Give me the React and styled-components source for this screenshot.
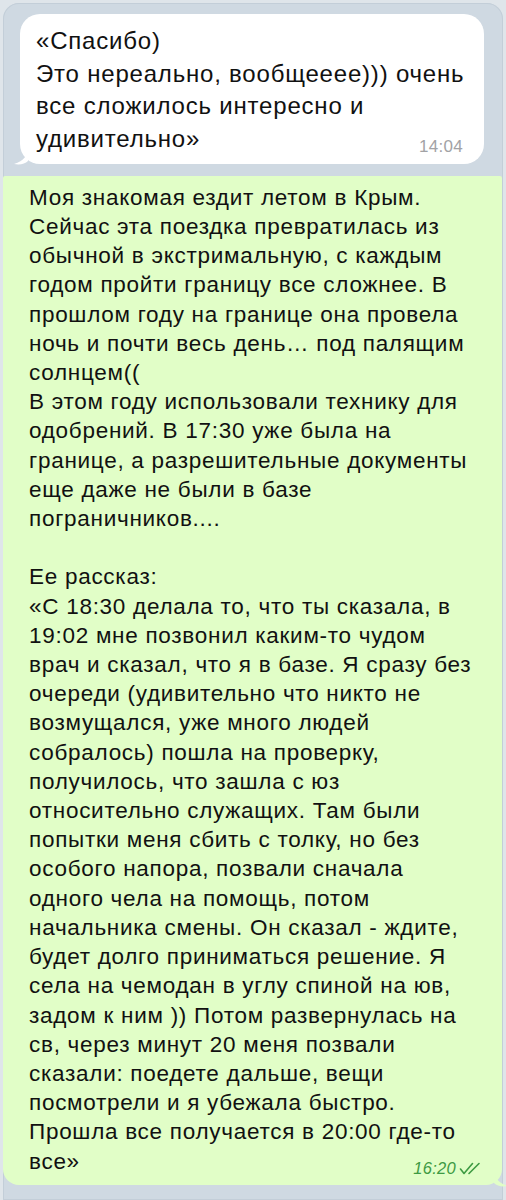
import React from 'react'
import styled, { createGlobalStyle } from 'styled-components'

const GlobalStyle = createGlobalStyle`
  html, body {
    margin: 0;
    padding: 0;
    background: #dfe5ea;
  }
  body {
    font-family: "Liberation Sans", Arial, sans-serif;
    -webkit-font-smoothing: antialiased;
  }
`

const incoming = [
  '«Спасибо)',
  'Это нереально, вообщееее))) очень',
  'все сложилось интересно и',
  'удивительно»',
]

const outgoing = [
  'Моя знакомая ездит летом в Крым.',
  'Сейчас эта поездка превратилась из',
  'обычной в экстримальную, с каждым',
  'годом пройти границу все сложнее. В',
  'прошлом году на границе она провела',
  'ночь и почти весь день… под палящим',
  'солнцем((',
  'В этом году использовали технику для',
  'одобрений. В 17:30 уже была на',
  'границе, а разрешительные документы',
  'еще даже не были в базе',
  'пограничников....',
  '',
  'Ее рассказ:',
  '«С 18:30 делала то, что ты сказала, в',
  '19:02 мне позвонил каким-то чудом',
  'врач и сказал, что я в базе. Я сразу без',
  'очереди (удивительно что никто не',
  'возмущался, уже много людей',
  'собралось) пошла на проверку,',
  'получилось, что зашла с юз',
  'относительно служащих. Там были',
  'попытки меня сбить с толку, но без',
  'особого напора, позвали сначала',
  'одного чела на помощь, потом',
  'начальника смены. Он сказал - ждите,',
  'будет долго приниматься решение. Я',
  'села на чемодан в углу спиной на юв,',
  'задом к ним )) Потом развернулась на',
  'св, через минут 20 меня позвали',
  'сказали: поедете дальше, вещи',
  'посмотрели и я убежала быстро.',
  'Прошла все получается в 20:00 где-то',
  'все»',
]

const DoubleCheck = () => (
  <svg width="23" height="13" viewBox="0 0 23 13">
    <path d="M1.5 7 L5 11.5 L13.5 1.5" stroke="#3d9a43" strokeWidth="1.6" fill="none" strokeLinecap="round" strokeLinejoin="round" />
    <path d="M10 11.5 L20 1.5" stroke="#3d9a43" strokeWidth="1.6" fill="none" strokeLinecap="round" strokeLinejoin="round" />
  </svg>
)

function MessageText({ lines, size, ls, lh, children }) {
  const body = lines.slice(0, -1).join('\n')
  const last = lines[lines.length - 1]
  return (
    <Text $size={size} $ls={ls} $lh={lh}>
      {body}
      <LastRow>
        <span>{last}</span>
        {children}
      </LastRow>
    </Text>
  )
}

export default function App() {
  return (
    <>
      <GlobalStyle />
      <Screen>
        <Frame>
          <Row>
            <Bubble>
              <MessageText lines={incoming} size={24} ls={0.8} lh={32.7}>
                <Time $shift={2}>14:04</Time>
              </MessageText>
              <TailLeft viewBox="0 0 14 18">
                <path d="M14 0 C14 8 10 14 0 17 C6 18 11 17 14 14 Z" fill="#fff" />
              </TailLeft>
            </Bubble>
          </Row>
          <OutBubble>
            <MessageText lines={outgoing} size={22.5} ls={0.72} lh={29.2}>
              <Time $out>
                16:20
                <DoubleCheck />
              </Time>
            </MessageText>
            <TailRight viewBox="0 0 14 18">
              <path d="M0 0 C0 8 4 14 14 17 C8 18 3 17 0 14 Z" fill="#e1fec7" />
            </TailRight>
          </OutBubble>
        </Frame>
      </Screen>
    </>
  )
}

const Screen = styled.div`
  width: 506px;
  height: 1200px;
  padding: 3px 3px 0 3px;
  box-sizing: border-box;
  overflow: hidden;
`

const Frame = styled.div`
  height: 100%;
  background: #cfd9e2;
  border-radius: 16px 16px 0 0;
  box-shadow: inset 0 0 0 1px #c3ced8;
  padding-top: 11px;
  box-sizing: border-box;
  display: flex;
  flex-direction: column;
  gap: 12px;
`

const Row = styled.div`
  display: flex;
  padding-left: 17px;
`

const Bubble = styled.div`
  position: relative;
  width: 464px;
  box-sizing: border-box;
  padding: 11px 21px 8px 16px;
  background: #ffffff;
  border-radius: 20px;
`

const OutBubble = styled.div`
  position: relative;
  width: 499px;
  box-sizing: border-box;
  padding: 7px 20px 9px 26px;
  background: #e1fec7;
  border-radius: 2px 2px 16px 16px;
`

const Text = styled.div`
  white-space: pre;
  font-size: ${p => p.$size}px;
  letter-spacing: ${p => p.$ls}px;
  line-height: ${p => p.$lh}px;
  color: #111;
`

const LastRow = styled.div`
  display: flex;
  justify-content: space-between;
  align-items: flex-end;
`

const Time = styled.span`
  display: flex;
  align-items: center;
  gap: 3px;
  margin-bottom: ${p => p.$shift || 0}px;
  font-size: ${p => (p.$out ? '16.5px' : '17px')};
  line-height: 15px;
  letter-spacing: 0.3px;
  white-space: nowrap;
  font-style: ${p => (p.$out ? 'italic' : 'normal')};
  color: ${p => (p.$out ? '#3d9a43' : '#a2a2a5')};
`

const TailLeft = styled.svg`
  position: absolute;
  left: -6px;
  bottom: -1px;
  width: 14px;
  height: 18px;
`

const TailRight = styled.svg`
  position: absolute;
  right: -6px;
  bottom: -2px;
  width: 14px;
  height: 18px;
`
